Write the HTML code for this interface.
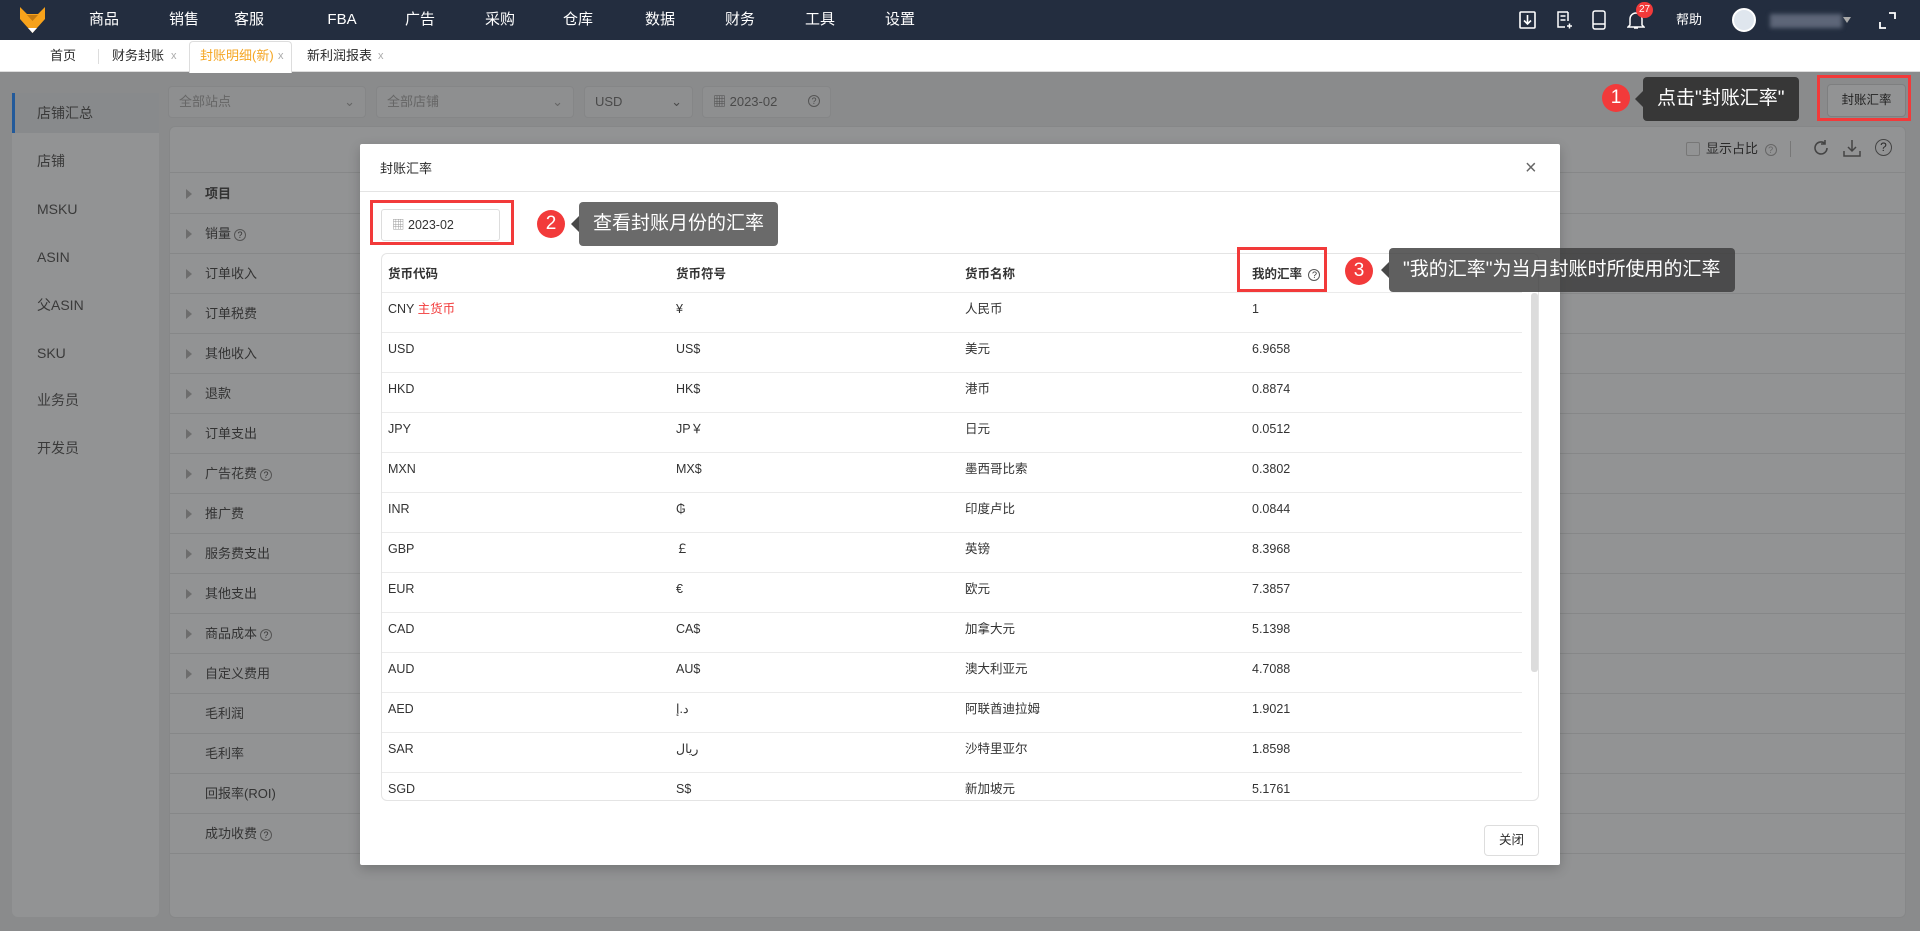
<!DOCTYPE html>
<html><head><meta charset="utf-8">
<style>
*{box-sizing:border-box;margin:0;padding:0}
body{width:1920px;height:931px;overflow:hidden;position:relative;font-family:"Liberation Sans","Noto Sans CJK SC",sans-serif;background:#8a8b8c;color:#2a2a2a;line-height:1.2}
.abs{position:absolute}
.nav{left:0;top:0;width:1920px;height:40px;background:#232d3f;color:#fff;font-size:15px}
.nav .it{position:absolute;top:0;line-height:40px;height:40px;transform:translateX(-50%)}
.tabs{left:0;top:40px;width:1920px;height:32px;background:#fff;font-size:13px;border-bottom:1px solid #ddd}
.tabs span{position:absolute;top:0;line-height:32px}
.tabs .x{color:#aaa;font-size:11px}
.side{left:12px;top:93px;width:147px;height:824px;background:#929394;border-radius:6px;font-size:14px;color:#3a3a3a}
.side div{position:absolute;left:25px;line-height:40px;height:40px}
.sel{background:#8e8f90;border:1px solid #858687;border-radius:4px;height:32px;top:86px;font-size:13px;color:#4a4a4a;padding:0 10px;line-height:30px}
.panel{left:169px;top:126px;width:1737px;height:792px;background:#929394;border:1px solid #868788;border-radius:6px}
.row{position:absolute;left:0;width:100%;height:40px;border-bottom:1px solid #868788;font-size:13px;color:#333}
.row .ar{position:absolute;left:16px;top:15px;width:0;height:0;border-left:6px solid #6d6d6d;border-top:5px solid transparent;border-bottom:5px solid transparent}
.row .tx{position:absolute;left:35px;top:0;line-height:40px}
.q{display:inline-block;width:12px;height:12px;border:1px solid #555;border-radius:50%;font-size:9px;line-height:10px;text-align:center;vertical-align:middle;margin-left:3px;font-weight:normal}
.modal{left:360px;top:144px;width:1200px;height:721px;background:#fff;border-radius:2px;box-shadow:0 4px 12px rgba(0,0,0,.2)}
.tbl{left:21px;top:109px;width:1158px;height:548px;border:1px solid #e4e4e4;border-radius:6px;overflow:hidden}
.tr{position:absolute;left:0;width:1140px;height:40px;border-bottom:1px solid #ebebeb;font-size:12.5px;color:#333}
.tr>span{position:absolute;top:-4px;line-height:40px;height:40px}
.red{border:3px solid #f23a3a;position:absolute}
.circ{position:absolute;width:28px;height:28px;border-radius:50%;background:#f23a3a;color:#fff;font-size:19px;text-align:center;line-height:28px}
.tip{position:absolute;background:rgba(40,40,40,.85);color:#fff;font-size:19px;border-radius:4px;padding:0 14px;line-height:44px;white-space:nowrap}
.tip:before{content:"";position:absolute;left:-8px;top:14px;border-right:8px solid rgba(40,40,40,.85);border-top:8px solid transparent;border-bottom:8px solid transparent}
</style></head><body>
<div class="abs nav">
<svg class="abs" style="left:20px;top:7px" width="25" height="26" viewBox="0 0 25 26"><path d="M0 0 L7 7 L18 7 L25 0 L25 12 L12.5 26 L0 12Z" fill="#f7a21b"/><path d="M7 8 L12.5 14 L18 8Z" fill="#c57a10"/><path d="M8 21 L12.5 26 L17 21Z" fill="#fff"/></svg>
<span class="it" style="left:104px">商品</span><span class="it" style="left:184px">销售</span><span class="it" style="left:249px">客服</span><span class="it" style="left:342px">FBA</span><span class="it" style="left:420px">广告</span><span class="it" style="left:500px">采购</span><span class="it" style="left:578px">仓库</span><span class="it" style="left:660px">数据</span><span class="it" style="left:740px">财务</span><span class="it" style="left:820px">工具</span><span class="it" style="left:900px">设置</span>
<svg class="abs" style="left:1519px;top:11px" width="17" height="18"><rect x="1" y="1" width="15" height="16" rx="1" fill="none" stroke="#fff" stroke-width="1.6"/><path d="M8.5 4v9M5 9.5l3.5 3.5 3.5-3.5" fill="none" stroke="#fff" stroke-width="1.6"/></svg>
<svg class="abs" style="left:1556px;top:10px" width="17" height="20"><path d="M12 2H2v15h7" fill="none" stroke="#fff" stroke-width="1.5"/><path d="M12 2v9M4.5 6h5M4.5 10h5M11 16h5M13.5 13.5v5" stroke="#fff" stroke-width="1.5"/></svg>
<svg class="abs" style="left:1592px;top:10px" width="14" height="20"><rect x="1" y="1" width="12" height="18" rx="2" fill="none" stroke="#fff" stroke-width="1.5"/><path d="M1 14h12" stroke="#fff" stroke-width="1.5"/></svg>
<svg class="abs" style="left:1627px;top:10px" width="18" height="20"><path d="M3 15V9a6 6 0 0 1 12 0v6l2 2H1z M7 18h4" fill="none" stroke="#fff" stroke-width="1.5"/></svg>
<div class="abs" style="left:1636px;top:2px;width:17px;height:16px;border-radius:8px;background:#f23a3a;font-size:10px;text-align:center;line-height:16px">27</div>
<span class="it" style="left:1689px;font-size:13px">帮助</span>
<div class="abs" style="left:1732px;top:8px;width:24px;height:24px;border-radius:50%;background:#dfe6ee;border:2px solid #fff"></div>
<div class="abs" style="left:1770px;top:14px;width:72px;height:14px;background:#5d6678;filter:blur(2px)"></div>
<div class="abs" style="left:1843px;top:17px;border-top:6px solid #aaa;border-left:4px solid transparent;border-right:4px solid transparent"></div>
<svg class="abs" style="left:1879px;top:12px" width="17" height="17"><path d="M10 1h6v6M1 10v6h6" fill="none" stroke="#fff" stroke-width="1.8"/></svg>
</div>
<div class="abs tabs">
<span style="left:50px">首页</span><div class="abs" style="left:98px;top:9px;width:1px;height:15px;background:#ddd"></div>
<span style="left:112px">财务封账</span><span class="x" style="left:171px">x</span>
<div class="abs" style="left:189px;top:1px;width:103px;height:32px;border:1px solid #ddd;border-bottom:none;border-radius:4px 4px 0 0;background:#fff"></div>
<span style="left:200px;color:#f5a623">封账明细(新)</span><span class="x" style="left:278px">x</span>
<span style="left:307px">新利润报表</span><span class="x" style="left:378px">x</span>
</div>
<div class="abs side">
<div style="left:0;top:0;width:147px;height:40px;background:#888a8c;border-left:3px solid #235a9a"></div>
<div style="top:0">店铺汇总</div><div style="top:48px">店铺</div><div style="top:96px">MSKU</div><div style="top:144px">ASIN</div><div style="top:192px">父ASIN</div><div style="top:240px">SKU</div><div style="top:287px">业务员</div><div style="top:335px">开发员</div>
</div>
<div class="abs sel" style="left:168px;width:198px;color:#666">全部站点<span style="float:right;color:#666">⌄</span></div>
<div class="abs sel" style="left:376px;width:198px;color:#666">全部店铺<span style="float:right">⌄</span></div>
<div class="abs sel" style="left:584px;width:109px">USD<span style="float:right">⌄</span></div>
<div class="abs sel" style="left:702px;width:129px">▦ 2023-02<span style="float:right;margin-top:8px" class="q">?</span></div>
<div class="abs" style="left:1827px;top:84px;width:79px;height:33px;border:1px solid #7e7f80;border-radius:4px;background:#929394;font-size:12.5px;text-align:center;line-height:31px;color:#222">封账汇率</div>
<div class="red" style="left:1817px;top:75px;width:94px;height:46px"></div>
<div class="circ" style="left:1602px;top:84px">1</div>
<div class="tip" style="left:1643px;top:77px">点击"封账汇率"</div>
<div class="abs panel">
<div class="abs" style="left:0;top:0;width:100%;height:46px;border-bottom:1px solid #868788"></div>
<div class="abs" style="left:1516px;top:15px;width:14px;height:14px;border:1px solid #777;border-radius:2px"></div>
<div class="abs" style="left:1536px;top:13px;font-size:13px;line-height:18px">显示占比 <span class="q" style="border-color:#666;color:#666">?</span></div>
<div class="abs" style="left:1620px;top:14px;width:1px;height:16px;background:#777"></div>
<svg class="abs" style="left:1642px;top:12px" width="18" height="18"><path d="M15 9a6 6 0 1 1-2-4.5M13 1v4h-4" fill="none" stroke="#444" stroke-width="1.6"/></svg>
<svg class="abs" style="left:1673px;top:12px" width="18" height="18"><path d="M9 1v11M5 8l4 4 4-4M1 12v5h16v-5" fill="none" stroke="#444" stroke-width="1.5"/></svg>
<div class="abs" style="left:1705px;top:12px;width:17px;height:17px;border:1.5px solid #444;border-radius:50%;font-size:12px;text-align:center;line-height:14px">?</div>
<div class="row" style="top:47px"><i class="ar"></i><span class="tx" style="font-weight:bold">项目</span></div>
<div class="row" style="top:87px"><i class="ar"></i><span class="tx">销量<span class="q">?</span></span></div>
<div class="row" style="top:127px"><i class="ar"></i><span class="tx">订单收入</span></div>
<div class="row" style="top:167px"><i class="ar"></i><span class="tx">订单税费</span></div>
<div class="row" style="top:207px"><i class="ar"></i><span class="tx">其他收入</span></div>
<div class="row" style="top:247px"><i class="ar"></i><span class="tx">退款</span></div>
<div class="row" style="top:287px"><i class="ar"></i><span class="tx">订单支出</span></div>
<div class="row" style="top:327px"><i class="ar"></i><span class="tx">广告花费<span class="q">?</span></span></div>
<div class="row" style="top:367px"><i class="ar"></i><span class="tx">推广费</span></div>
<div class="row" style="top:407px"><i class="ar"></i><span class="tx">服务费支出</span></div>
<div class="row" style="top:447px"><i class="ar"></i><span class="tx">其他支出</span></div>
<div class="row" style="top:487px"><i class="ar"></i><span class="tx">商品成本<span class="q">?</span></span></div>
<div class="row" style="top:527px"><i class="ar"></i><span class="tx">自定义费用</span></div>
<div class="row" style="top:567px"><span class="tx">毛利润</span></div>
<div class="row" style="top:607px"><span class="tx">毛利率</span></div>
<div class="row" style="top:647px"><span class="tx">回报率(ROI)</span></div>
<div class="row" style="top:687px"><span class="tx">成功收费<span class="q">?</span></span></div>
</div>
<div class="abs modal">
<div class="abs" style="left:20px;top:17px;font-size:13px">封账汇率</div>
<div class="abs" style="left:1165px;top:12px;font-size:20px;color:#666;font-weight:300">×</div>
<div class="abs" style="left:0;top:47px;width:1200px;height:1px;background:#e4e4e4"></div>
<div class="abs" style="left:21px;top:65px;width:119px;height:32px;border:1px solid #ddd;border-radius:3px;font-size:12.5px;padding:0 10px;line-height:30px;color:#333"><span style="color:#999">▦</span> 2023-02</div>
<div class="red" style="left:10px;top:56px;width:144px;height:45px"></div>
<div class="circ" style="left:177px;top:66px">2</div>
<div class="tip" style="left:219px;top:58px;background:#6a6a6a">查看封账月份的汇率</div>
<div class="abs tbl">
<div class="tr" style="top:0;height:39px;font-weight:bold"><span style="left:6px;top:0">货币代码</span><span style="left:294px;top:0">货币符号</span><span style="left:583px;top:0">货币名称</span><span style="left:870px;top:0">我的汇率 <span class="q">?</span></span></div>
<div class="tr" style="top:39px"><span style="left:6px">CNY <b style="color:#f23a3a;font-weight:normal">主货币</b></span><span style="left:294px">¥</span><span style="left:583px">人民币</span><span style="left:870px">1</span></div>
<div class="tr" style="top:79px"><span style="left:6px">USD</span><span style="left:294px">US$</span><span style="left:583px">美元</span><span style="left:870px">6.9658</span></div>
<div class="tr" style="top:119px"><span style="left:6px">HKD</span><span style="left:294px">HK$</span><span style="left:583px">港币</span><span style="left:870px">0.8874</span></div>
<div class="tr" style="top:159px"><span style="left:6px">JPY</span><span style="left:294px">JP￥</span><span style="left:583px">日元</span><span style="left:870px">0.0512</span></div>
<div class="tr" style="top:199px"><span style="left:6px">MXN</span><span style="left:294px">MX$</span><span style="left:583px">墨西哥比索</span><span style="left:870px">0.3802</span></div>
<div class="tr" style="top:239px"><span style="left:6px">INR</span><span style="left:294px">₲</span><span style="left:583px">印度卢比</span><span style="left:870px">0.0844</span></div>
<div class="tr" style="top:279px"><span style="left:6px">GBP</span><span style="left:294px">￡</span><span style="left:583px">英镑</span><span style="left:870px">8.3968</span></div>
<div class="tr" style="top:319px"><span style="left:6px">EUR</span><span style="left:294px">€</span><span style="left:583px">欧元</span><span style="left:870px">7.3857</span></div>
<div class="tr" style="top:359px"><span style="left:6px">CAD</span><span style="left:294px">CA$</span><span style="left:583px">加拿大元</span><span style="left:870px">5.1398</span></div>
<div class="tr" style="top:399px"><span style="left:6px">AUD</span><span style="left:294px">AU$</span><span style="left:583px">澳大利亚元</span><span style="left:870px">4.7088</span></div>
<div class="tr" style="top:439px"><span style="left:6px">AED</span><span style="left:294px">د.إ</span><span style="left:583px">阿联酋迪拉姆</span><span style="left:870px">1.9021</span></div>
<div class="tr" style="top:479px"><span style="left:6px">SAR</span><span style="left:294px">ريال</span><span style="left:583px">沙特里亚尔</span><span style="left:870px">1.8598</span></div>
<div class="tr" style="top:519px"><span style="left:6px">SGD</span><span style="left:294px">S$</span><span style="left:583px">新加坡元</span><span style="left:870px">5.1761</span></div>
<div class="abs" style="left:1149px;top:39px;width:7px;height:379px;background:#dcdcdc;border-radius:3px"></div>
</div>
<div class="red" style="left:877px;top:103px;width:90px;height:45px"></div>
<div class="circ" style="left:985px;top:113px">3</div>
<div class="tip" style="left:1029px;top:104px;background:rgba(60,60,60,.82)">"我的汇率"为当月封账时所使用的汇率</div>
<div class="abs" style="left:1124px;top:681px;width:55px;height:31px;border:1px solid #ddd;border-radius:4px;font-size:12.5px;text-align:center;line-height:29px">关闭</div>
</div>
</body></html>
